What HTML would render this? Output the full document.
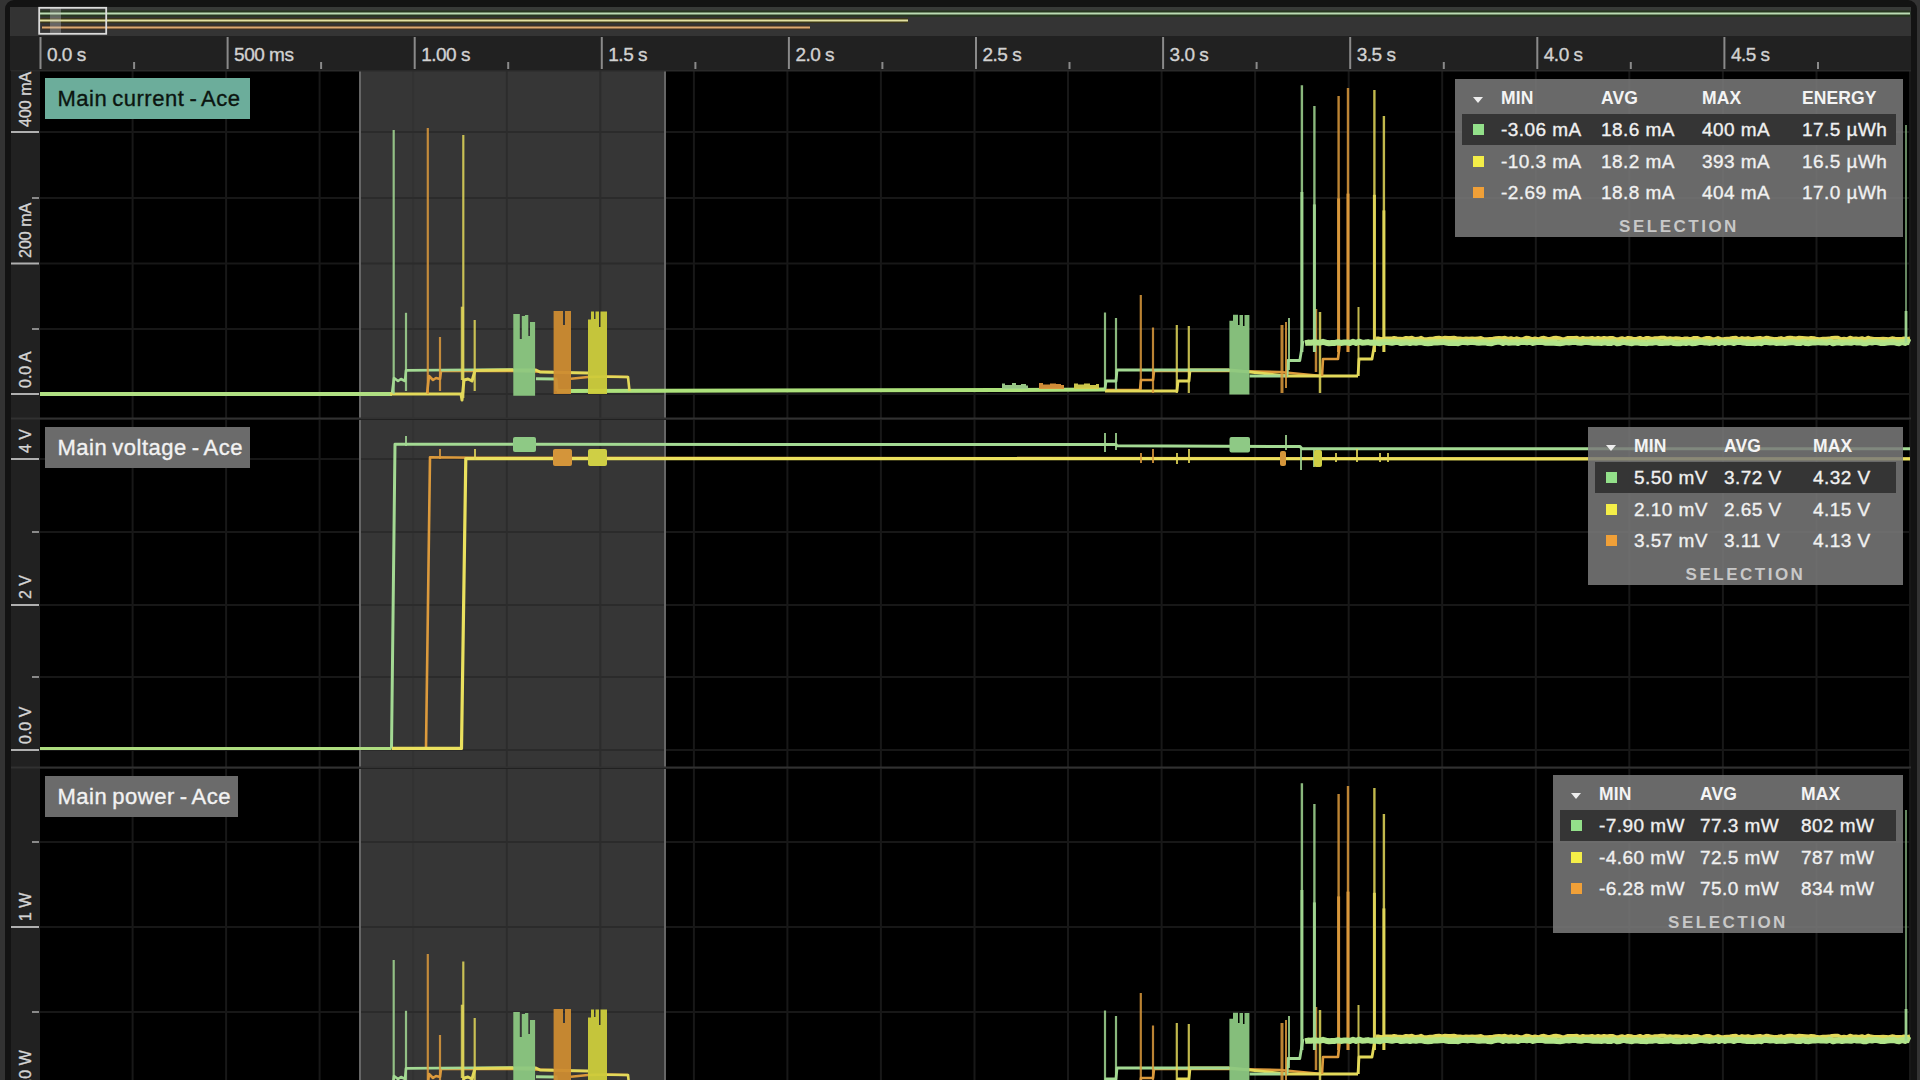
<!DOCTYPE html><html><head><meta charset="utf-8"><style>
*{margin:0;padding:0;box-sizing:border-box}
.tl,.yl,.lab,.st .c{-webkit-text-stroke:0.35px currentColor}
html,body{width:1920px;height:1080px;overflow:hidden;background:#333;font-family:"Liberation Sans",sans-serif}
.a{position:absolute}
.tl{position:absolute;top:43.5px;font-size:19px;line-height:22px;color:#d2d2d2;letter-spacing:-0.5px;white-space:nowrap}
.yl{position:absolute;font-size:16px;line-height:16px;color:#d4d4d4;white-space:nowrap;transform-origin:0 0;transform:rotate(-90deg)}
.lab{position:absolute;left:45px;height:41px;font-size:22px;line-height:41px;padding-left:12.5px;white-space:nowrap;letter-spacing:0.5px;word-spacing:-1.5px}
.st{position:absolute;background:rgba(122,122,122,0.86);color:#f0f0f0}
.st .h{position:absolute;font-weight:bold;font-size:17.5px;line-height:20px;color:#f4f4f4;top:8.5px;letter-spacing:0.1px}
.st .c{position:absolute;font-size:19px;line-height:22px;white-space:nowrap;letter-spacing:0.45px}
.st .hl{position:absolute;left:7px;background:#353535;height:31px}
.st .sq{position:absolute;width:11px;height:11px}
.st .sel{position:absolute;font-weight:bold;font-size:17px;line-height:20px;letter-spacing:2.5px;color:#c8c8c8;white-space:nowrap}
.tri{position:absolute;width:0;height:0;border-left:5.5px solid transparent;border-right:5.5px solid transparent;border-top:6px solid #eee}
</style></head><body>
<div class="a" style="left:4.5px;top:0;width:1912.5px;height:1120px;background:#131313;border-radius:9px"></div>
<div class="a" style="left:10px;top:7px;width:1901px;height:29px;background:#343434"></div>
<div class="a" style="left:39px;top:7px;width:1872px;height:10px;background:#2d382d"></div>
<div class="a" style="left:10.5px;top:7px;width:28px;height:29px;background:#333"></div>
<div class="a" style="left:10px;top:36px;width:1901px;height:35px;background:#212121"></div>
<div class="a" style="left:11px;top:71px;width:29px;height:1009px;background:#212121"></div>
<div class="a" style="left:40px;top:71px;width:1870px;height:347px;background:#000"></div>
<div class="a" style="left:40px;top:420px;width:1870px;height:347px;background:#000"></div>
<div class="a" style="left:40px;top:769px;width:1870px;height:311px;background:#000"></div>
<svg class="a" style="left:0;top:0" width="1920" height="1080"><line x1="132.6" y1="71" x2="132.6" y2="418" stroke="#181818" stroke-width="2"/><line x1="226.1" y1="71" x2="226.1" y2="418" stroke="#181818" stroke-width="2"/><line x1="319.6" y1="71" x2="319.6" y2="418" stroke="#181818" stroke-width="2"/><line x1="413.2" y1="71" x2="413.2" y2="418" stroke="#181818" stroke-width="2"/><line x1="506.8" y1="71" x2="506.8" y2="418" stroke="#181818" stroke-width="2"/><line x1="600.3" y1="71" x2="600.3" y2="418" stroke="#181818" stroke-width="2"/><line x1="693.9" y1="71" x2="693.9" y2="418" stroke="#181818" stroke-width="2"/><line x1="787.4" y1="71" x2="787.4" y2="418" stroke="#181818" stroke-width="2"/><line x1="880.9" y1="71" x2="880.9" y2="418" stroke="#181818" stroke-width="2"/><line x1="974.5" y1="71" x2="974.5" y2="418" stroke="#181818" stroke-width="2"/><line x1="1068.0" y1="71" x2="1068.0" y2="418" stroke="#181818" stroke-width="2"/><line x1="1161.6" y1="71" x2="1161.6" y2="418" stroke="#181818" stroke-width="2"/><line x1="1255.1" y1="71" x2="1255.1" y2="418" stroke="#181818" stroke-width="2"/><line x1="1348.7" y1="71" x2="1348.7" y2="418" stroke="#181818" stroke-width="2"/><line x1="1442.2" y1="71" x2="1442.2" y2="418" stroke="#181818" stroke-width="2"/><line x1="1535.8" y1="71" x2="1535.8" y2="418" stroke="#181818" stroke-width="2"/><line x1="1629.3" y1="71" x2="1629.3" y2="418" stroke="#181818" stroke-width="2"/><line x1="1722.9" y1="71" x2="1722.9" y2="418" stroke="#181818" stroke-width="2"/><line x1="1816.5" y1="71" x2="1816.5" y2="418" stroke="#181818" stroke-width="2"/><line x1="1910.0" y1="71" x2="1910.0" y2="418" stroke="#181818" stroke-width="2"/><line x1="40" y1="132" x2="1910" y2="132" stroke="#171717" stroke-width="2"/><line x1="40" y1="198" x2="1910" y2="198" stroke="#171717" stroke-width="2"/><line x1="40" y1="263.5" x2="1910" y2="263.5" stroke="#171717" stroke-width="2"/><line x1="40" y1="329" x2="1910" y2="329" stroke="#171717" stroke-width="2"/><line x1="40" y1="394" x2="1910" y2="394" stroke="#171717" stroke-width="2"/><line x1="132.6" y1="420" x2="132.6" y2="767" stroke="#181818" stroke-width="2"/><line x1="226.1" y1="420" x2="226.1" y2="767" stroke="#181818" stroke-width="2"/><line x1="319.6" y1="420" x2="319.6" y2="767" stroke="#181818" stroke-width="2"/><line x1="413.2" y1="420" x2="413.2" y2="767" stroke="#181818" stroke-width="2"/><line x1="506.8" y1="420" x2="506.8" y2="767" stroke="#181818" stroke-width="2"/><line x1="600.3" y1="420" x2="600.3" y2="767" stroke="#181818" stroke-width="2"/><line x1="693.9" y1="420" x2="693.9" y2="767" stroke="#181818" stroke-width="2"/><line x1="787.4" y1="420" x2="787.4" y2="767" stroke="#181818" stroke-width="2"/><line x1="880.9" y1="420" x2="880.9" y2="767" stroke="#181818" stroke-width="2"/><line x1="974.5" y1="420" x2="974.5" y2="767" stroke="#181818" stroke-width="2"/><line x1="1068.0" y1="420" x2="1068.0" y2="767" stroke="#181818" stroke-width="2"/><line x1="1161.6" y1="420" x2="1161.6" y2="767" stroke="#181818" stroke-width="2"/><line x1="1255.1" y1="420" x2="1255.1" y2="767" stroke="#181818" stroke-width="2"/><line x1="1348.7" y1="420" x2="1348.7" y2="767" stroke="#181818" stroke-width="2"/><line x1="1442.2" y1="420" x2="1442.2" y2="767" stroke="#181818" stroke-width="2"/><line x1="1535.8" y1="420" x2="1535.8" y2="767" stroke="#181818" stroke-width="2"/><line x1="1629.3" y1="420" x2="1629.3" y2="767" stroke="#181818" stroke-width="2"/><line x1="1722.9" y1="420" x2="1722.9" y2="767" stroke="#181818" stroke-width="2"/><line x1="1816.5" y1="420" x2="1816.5" y2="767" stroke="#181818" stroke-width="2"/><line x1="1910.0" y1="420" x2="1910.0" y2="767" stroke="#181818" stroke-width="2"/><line x1="40" y1="459" x2="1910" y2="459" stroke="#171717" stroke-width="2"/><line x1="40" y1="532" x2="1910" y2="532" stroke="#171717" stroke-width="2"/><line x1="40" y1="605" x2="1910" y2="605" stroke="#171717" stroke-width="2"/><line x1="40" y1="677" x2="1910" y2="677" stroke="#171717" stroke-width="2"/><line x1="40" y1="750" x2="1910" y2="750" stroke="#171717" stroke-width="2"/><line x1="132.6" y1="769" x2="132.6" y2="1080" stroke="#181818" stroke-width="2"/><line x1="226.1" y1="769" x2="226.1" y2="1080" stroke="#181818" stroke-width="2"/><line x1="319.6" y1="769" x2="319.6" y2="1080" stroke="#181818" stroke-width="2"/><line x1="413.2" y1="769" x2="413.2" y2="1080" stroke="#181818" stroke-width="2"/><line x1="506.8" y1="769" x2="506.8" y2="1080" stroke="#181818" stroke-width="2"/><line x1="600.3" y1="769" x2="600.3" y2="1080" stroke="#181818" stroke-width="2"/><line x1="693.9" y1="769" x2="693.9" y2="1080" stroke="#181818" stroke-width="2"/><line x1="787.4" y1="769" x2="787.4" y2="1080" stroke="#181818" stroke-width="2"/><line x1="880.9" y1="769" x2="880.9" y2="1080" stroke="#181818" stroke-width="2"/><line x1="974.5" y1="769" x2="974.5" y2="1080" stroke="#181818" stroke-width="2"/><line x1="1068.0" y1="769" x2="1068.0" y2="1080" stroke="#181818" stroke-width="2"/><line x1="1161.6" y1="769" x2="1161.6" y2="1080" stroke="#181818" stroke-width="2"/><line x1="1255.1" y1="769" x2="1255.1" y2="1080" stroke="#181818" stroke-width="2"/><line x1="1348.7" y1="769" x2="1348.7" y2="1080" stroke="#181818" stroke-width="2"/><line x1="1442.2" y1="769" x2="1442.2" y2="1080" stroke="#181818" stroke-width="2"/><line x1="1535.8" y1="769" x2="1535.8" y2="1080" stroke="#181818" stroke-width="2"/><line x1="1629.3" y1="769" x2="1629.3" y2="1080" stroke="#181818" stroke-width="2"/><line x1="1722.9" y1="769" x2="1722.9" y2="1080" stroke="#181818" stroke-width="2"/><line x1="1816.5" y1="769" x2="1816.5" y2="1080" stroke="#181818" stroke-width="2"/><line x1="1910.0" y1="769" x2="1910.0" y2="1080" stroke="#181818" stroke-width="2"/><line x1="40" y1="842" x2="1910" y2="842" stroke="#171717" stroke-width="2"/><line x1="40" y1="927" x2="1910" y2="927" stroke="#171717" stroke-width="2"/><line x1="40" y1="1012" x2="1910" y2="1012" stroke="#171717" stroke-width="2"/><rect x="359" y="71" width="307" height="347" fill="#363636"/><line x1="413.2" y1="71" x2="413.2" y2="418" stroke="#323232" stroke-width="2"/><line x1="506.8" y1="71" x2="506.8" y2="418" stroke="#2c2c2c" stroke-width="2"/><line x1="600.3" y1="71" x2="600.3" y2="418" stroke="#2c2c2c" stroke-width="2"/><line x1="361" y1="132" x2="664" y2="132" stroke="#2b2b2b" stroke-width="2"/><line x1="361" y1="198" x2="664" y2="198" stroke="#2b2b2b" stroke-width="2"/><line x1="361" y1="263.5" x2="664" y2="263.5" stroke="#2b2b2b" stroke-width="2"/><line x1="361" y1="329" x2="664" y2="329" stroke="#2b2b2b" stroke-width="2"/><line x1="361" y1="394" x2="664" y2="394" stroke="#2b2b2b" stroke-width="2"/><line x1="360" y1="71" x2="360" y2="418" stroke="#666" stroke-width="2"/><line x1="665" y1="71" x2="665" y2="418" stroke="#666" stroke-width="2"/><rect x="359" y="420" width="307" height="347" fill="#363636"/><line x1="413.2" y1="420" x2="413.2" y2="767" stroke="#323232" stroke-width="2"/><line x1="506.8" y1="420" x2="506.8" y2="767" stroke="#2c2c2c" stroke-width="2"/><line x1="600.3" y1="420" x2="600.3" y2="767" stroke="#2c2c2c" stroke-width="2"/><line x1="361" y1="459" x2="664" y2="459" stroke="#2b2b2b" stroke-width="2"/><line x1="361" y1="532" x2="664" y2="532" stroke="#2b2b2b" stroke-width="2"/><line x1="361" y1="605" x2="664" y2="605" stroke="#2b2b2b" stroke-width="2"/><line x1="361" y1="677" x2="664" y2="677" stroke="#2b2b2b" stroke-width="2"/><line x1="361" y1="750" x2="664" y2="750" stroke="#2b2b2b" stroke-width="2"/><line x1="360" y1="420" x2="360" y2="767" stroke="#666" stroke-width="2"/><line x1="665" y1="420" x2="665" y2="767" stroke="#666" stroke-width="2"/><rect x="359" y="769" width="307" height="311" fill="#363636"/><line x1="413.2" y1="769" x2="413.2" y2="1080" stroke="#323232" stroke-width="2"/><line x1="506.8" y1="769" x2="506.8" y2="1080" stroke="#2c2c2c" stroke-width="2"/><line x1="600.3" y1="769" x2="600.3" y2="1080" stroke="#2c2c2c" stroke-width="2"/><line x1="361" y1="842" x2="664" y2="842" stroke="#2b2b2b" stroke-width="2"/><line x1="361" y1="927" x2="664" y2="927" stroke="#2b2b2b" stroke-width="2"/><line x1="361" y1="1012" x2="664" y2="1012" stroke="#2b2b2b" stroke-width="2"/><line x1="360" y1="769" x2="360" y2="1080" stroke="#666" stroke-width="2"/><line x1="665" y1="769" x2="665" y2="1080" stroke="#666" stroke-width="2"/><rect x="11" y="417.5" width="1900" height="2" fill="#313131"/><rect x="11" y="766.5" width="1900" height="2" fill="#313131"/><rect x="11" y="70" width="1900" height="1.5" fill="#2a2a2a"/><path d="M40.0,394.0 L392.0,394.0" fill="none" stroke="#b0df82" stroke-width="4" stroke-linejoin="round" opacity="1"/><path d="M427.0,394.0 L429.0,376.0 L433.0,380.0 L436.0,378.0 L440.0,379.0 L441.0,371.0 L513.0,371.0 L553.0,372.0" fill="none" stroke="#dc9a3c" stroke-width="2.6" stroke-linejoin="round" opacity="1"/><path d="M571.0,378.8 L588.0,377.0 L607.0,376.5 L628.0,377.0" fill="none" stroke="#dc9a3c" stroke-width="2.5" stroke-linejoin="round" opacity="1"/><path d="M392.0,394.0 L394.0,378.0 L398.0,381.0 L401.0,379.0 L405.0,381.0 L406.0,370.4 L513.0,369.5" fill="none" stroke="#a3d993" stroke-width="2.6" stroke-linejoin="round" opacity="1"/><path d="M390.0,394.0 L461.0,394.0 L462.0,400.0 L464.0,380.0 L468.0,379.0 L472.0,381.0 L475.0,370.5 L513.0,370.0 L536.0,370.0 L540.0,372.0 L588.0,373.0" fill="none" stroke="#e3d95a" stroke-width="3" stroke-linejoin="round" opacity="1"/><line x1="393.7" y1="130" x2="393.7" y2="394" stroke="#a3d993" stroke-width="2.2" opacity="0.85"/><line x1="427.8" y1="128" x2="427.8" y2="394" stroke="#dc9a3c" stroke-width="2.2" opacity="0.85"/><line x1="463.3" y1="135" x2="463.3" y2="398" stroke="#e3d95a" stroke-width="2.2" opacity="0.85"/><line x1="406" y1="312.8" x2="406" y2="391" stroke="#a3d993" stroke-width="2.2" opacity="0.85"/><line x1="440" y1="337" x2="440" y2="391" stroke="#dc9a3c" stroke-width="2.2" opacity="0.85"/><line x1="474.7" y1="320" x2="474.7" y2="391" stroke="#e3d95a" stroke-width="2.2" opacity="0.85"/><line x1="462.3" y1="306.7" x2="462.3" y2="380" stroke="#e3d95a" stroke-width="3" opacity="0.85"/><path d="M536.0,378.8 L556.0,379.0 L557.0,391.0" fill="none" stroke="#a3d993" stroke-width="3" stroke-linejoin="round" opacity="1"/><path d="M557.0,391.0 L1000.0,390.0 L1105.0,389.5" fill="none" stroke="#ade27c" stroke-width="4" stroke-linejoin="round" opacity="1"/><path d="M607.0,376.8 L628.0,377.0 L629.5,391.0" fill="none" stroke="#e3d95a" stroke-width="2.6" stroke-linejoin="round" opacity="1"/><path d="M513.3,395.8 L513.3,314.0 L519.8,314.0 L519.8,339.0 L521.8,339.0 L521.8,316.0 L525.0,316.0 L525.0,315.0 L528.3,315.0 L528.3,336.0 L530.0,336.0 L530.0,322.0 L535.1,322.0 L535.1,395.8 Z" fill="#8cc882" opacity="0.95"/><path d="M553.6,394 L553.6,311.0 L563.0,311.0 L563.0,325.0 L565.0,325.0 L565.0,311.0 L571.0,311.0 L571,394 Z" fill="#cd8c32" opacity="0.95"/><path d="M588,394 L588.0,319.4 L591.0,319.4 L591.0,311.6 L594.0,311.6 L594.0,319.0 L595.5,319.0 L595.5,311.6 L599.0,311.6 L599.0,327.0 L600.5,327.0 L600.5,311.6 L607.0,311.6 L607,394 Z" fill="#cdcd3c" opacity="0.95"/><path d="M1002,389 L1002.0,383.5 L1005.0,383.5 L1005.0,385.0 L1012.0,385.0 L1012.0,383.0 L1016.0,383.0 L1016.0,385.0 L1021.0,385.0 L1021.0,384.0 L1026.0,384.0 L1026.0,385.5 L1028.0,385.5 L1028,389 Z" fill="#9fd08c" opacity="0.95"/><path d="M1039,389 L1039.0,383.0 L1043.0,383.0 L1043.0,384.5 L1050.0,384.5 L1050.0,383.5 L1056.0,383.5 L1056.0,384.0 L1061.0,384.0 L1061.0,385.0 L1064.0,385.0 L1064,389 Z" fill="#d9923a" opacity="0.95"/><path d="M1074,389 L1074.0,383.5 L1078.0,383.5 L1078.0,384.5 L1084.0,384.5 L1084.0,383.5 L1090.0,383.5 L1090.0,385.0 L1096.0,385.0 L1096.0,384.0 L1099.0,384.0 L1099,389 Z" fill="#d6d04e" opacity="0.95"/><path d="M1105.0,390.0 L1140.0,390.0 L1141.0,380.0 L1153.0,380.0 L1154.0,371.0 L1229.0,371.0 L1280.0,372.0 L1322.0,376.0" fill="none" stroke="#dc9a3c" stroke-width="2.6" stroke-linejoin="round" opacity="1"/><path d="M1105.0,391.0 L1177.0,391.0 L1178.0,381.0 L1189.0,381.0 L1190.0,370.0 L1229.0,370.0 L1250.0,372.0 L1288.0,376.0 L1358.0,376.0" fill="none" stroke="#e3d95a" stroke-width="2.8" stroke-linejoin="round" opacity="1"/><path d="M1105.0,389.0 L1106.0,381.0 L1116.0,381.0 L1117.0,370.0 L1229.0,370.0" fill="none" stroke="#a3d993" stroke-width="2.8" stroke-linejoin="round" opacity="1"/><line x1="1105" y1="312.5" x2="1105" y2="390" stroke="#a3d993" stroke-width="2.2" opacity="0.85"/><line x1="1116" y1="318" x2="1116" y2="390" stroke="#a3d993" stroke-width="2.2" opacity="0.85"/><line x1="1140.8" y1="295" x2="1140.8" y2="390" stroke="#dc9a3c" stroke-width="2.2" opacity="0.85"/><line x1="1153" y1="327.5" x2="1153" y2="393" stroke="#dc9a3c" stroke-width="2.2" opacity="0.85"/><line x1="1176.8" y1="325" x2="1176.8" y2="393" stroke="#e3d95a" stroke-width="2.2" opacity="0.85"/><line x1="1188.8" y1="326" x2="1188.8" y2="393" stroke="#e3d95a" stroke-width="2.2" opacity="0.85"/><path d="M1229.4,394.4 L1229.4,320.8 L1233.0,320.8 L1233.0,314.8 L1238.0,314.8 L1238.0,325.0 L1239.5,325.0 L1239.5,315.0 L1243.0,315.0 L1243.0,326.0 L1244.5,326.0 L1244.5,315.0 L1249.4,315.0 L1249.4,394.4 Z" fill="#8cc882" opacity="0.95"/><path d="M1249.5,376.0 L1287.0,376.0 L1288.0,360.5 L1299.8,360.5 L1303.0,341.0" fill="none" stroke="#a3d993" stroke-width="2.8" stroke-linejoin="round" opacity="1"/><path d="M1322.0,376.0 L1323.0,359.0 L1338.0,359.0 L1340.0,341.0" fill="none" stroke="#dc9a3c" stroke-width="2.6" stroke-linejoin="round" opacity="1"/><path d="M1358.0,376.0 L1359.0,359.0 L1372.0,359.0 L1375.0,341.0" fill="none" stroke="#e3d95a" stroke-width="2.8" stroke-linejoin="round" opacity="1"/><line x1="1282" y1="325" x2="1282" y2="393" stroke="#dc9a3c" stroke-width="3" opacity="0.85"/><line x1="1286" y1="322" x2="1286" y2="388" stroke="#dc9a3c" stroke-width="2" opacity="0.85"/><line x1="1289" y1="318" x2="1289" y2="370" stroke="#a3d993" stroke-width="2" opacity="0.85"/><line x1="1320" y1="312" x2="1320" y2="393" stroke="#e3d95a" stroke-width="2.5" opacity="0.85"/><line x1="1316" y1="309" x2="1316" y2="372" stroke="#dc9a3c" stroke-width="2.5" opacity="0.85"/><line x1="1358.5" y1="307" x2="1358.5" y2="376" stroke="#e3d95a" stroke-width="2" opacity="0.85"/><line x1="1301.9" y1="85.3" x2="1301.9" y2="352" stroke="#a3d993" stroke-width="2.4" opacity="0.85"/><line x1="1301.9" y1="191.98000000000002" x2="1301.9" y2="352" stroke="#a3d993" stroke-width="3.0" opacity="0.9"/><line x1="1314.4" y1="106" x2="1314.4" y2="352" stroke="#a3d993" stroke-width="2.4" opacity="0.85"/><line x1="1314.4" y1="204.4" x2="1314.4" y2="352" stroke="#a3d993" stroke-width="3.0" opacity="0.9"/><line x1="1338.6" y1="96" x2="1338.6" y2="352" stroke="#dc9a3c" stroke-width="2.4" opacity="0.85"/><line x1="1338.6" y1="198.4" x2="1338.6" y2="352" stroke="#dc9a3c" stroke-width="3.0" opacity="0.9"/><line x1="1348" y1="88" x2="1348" y2="352" stroke="#dc9a3c" stroke-width="2.4" opacity="0.85"/><line x1="1348" y1="193.60000000000002" x2="1348" y2="352" stroke="#dc9a3c" stroke-width="3.0" opacity="0.9"/><line x1="1374.4" y1="90" x2="1374.4" y2="352" stroke="#e3d95a" stroke-width="2.4" opacity="0.85"/><line x1="1374.4" y1="194.8" x2="1374.4" y2="352" stroke="#e3d95a" stroke-width="3.0" opacity="0.9"/><line x1="1383.9" y1="116" x2="1383.9" y2="352" stroke="#e3d95a" stroke-width="2.4" opacity="0.85"/><line x1="1383.9" y1="210.4" x2="1383.9" y2="352" stroke="#e3d95a" stroke-width="3.0" opacity="0.9"/><path d="M1376.0,338.4 L1379.0,338.6 L1382.0,339.2 L1385.0,338.4 L1388.0,338.5 L1391.0,338.6 L1394.0,338.0 L1397.0,338.5 L1400.0,338.7 L1403.0,339.0 L1406.0,337.9 L1409.0,338.2 L1412.0,337.8 L1415.0,339.0 L1418.0,338.8 L1421.0,337.8 L1424.0,339.3 L1427.0,339.2 L1430.0,338.7 L1433.0,338.7 L1436.0,338.0 L1439.0,337.7 L1442.0,338.5 L1445.0,337.8 L1448.0,338.0 L1451.0,338.1 L1454.0,337.7 L1457.0,338.4 L1460.0,338.4 L1463.0,339.0 L1466.0,338.5 L1469.0,338.7 L1472.0,338.5 L1475.0,338.8 L1478.0,338.4 L1481.0,338.1 L1484.0,339.3 L1487.0,339.3 L1490.0,339.0 L1493.0,338.8 L1496.0,338.2 L1499.0,338.1 L1502.0,338.2 L1505.0,337.8 L1508.0,338.9 L1511.0,338.3 L1514.0,339.1 L1517.0,338.3 L1520.0,339.2 L1523.0,339.1 L1526.0,337.7 L1529.0,338.0 L1532.0,339.2 L1535.0,338.5 L1538.0,339.3 L1541.0,338.3 L1544.0,337.8 L1547.0,338.7 L1550.0,338.9 L1553.0,338.1 L1556.0,337.8 L1559.0,338.2 L1562.0,339.2 L1565.0,338.9 L1568.0,337.9 L1571.0,338.1 L1574.0,337.9 L1577.0,337.8 L1580.0,339.0 L1583.0,338.0 L1586.0,338.6 L1589.0,338.4 L1592.0,338.0 L1595.0,338.9 L1598.0,337.9 L1601.0,338.7 L1604.0,337.9 L1607.0,338.4 L1610.0,338.0 L1613.0,338.1 L1616.0,339.3 L1619.0,339.0 L1622.0,338.2 L1625.0,339.1 L1628.0,338.0 L1631.0,338.3 L1634.0,339.1 L1637.0,338.7 L1640.0,337.9 L1643.0,339.3 L1646.0,338.0 L1649.0,338.1 L1652.0,338.9 L1655.0,338.2 L1658.0,338.2 L1661.0,337.8 L1664.0,337.8 L1667.0,338.6 L1670.0,338.1 L1673.0,338.7 L1676.0,338.3 L1679.0,338.4 L1682.0,339.2 L1685.0,338.5 L1688.0,338.6 L1691.0,339.1 L1694.0,338.0 L1697.0,337.9 L1700.0,339.2 L1703.0,339.0 L1706.0,338.1 L1709.0,338.0 L1712.0,338.9 L1715.0,339.2 L1718.0,338.0 L1721.0,339.2 L1724.0,339.1 L1727.0,338.7 L1730.0,338.4 L1733.0,337.9 L1736.0,337.8 L1739.0,339.2 L1742.0,338.1 L1745.0,338.8 L1748.0,338.1 L1751.0,339.0 L1754.0,338.7 L1757.0,338.2 L1760.0,338.0 L1763.0,338.9 L1766.0,337.8 L1769.0,338.1 L1772.0,338.6 L1775.0,339.1 L1778.0,338.7 L1781.0,338.1 L1784.0,339.2 L1787.0,338.0 L1790.0,337.7 L1793.0,338.1 L1796.0,338.4 L1799.0,337.8 L1802.0,338.0 L1805.0,338.3 L1808.0,338.6 L1811.0,337.9 L1814.0,338.3 L1817.0,339.1 L1820.0,339.3 L1823.0,338.8 L1826.0,338.8 L1829.0,338.6 L1832.0,337.9 L1835.0,337.8 L1838.0,337.7 L1841.0,339.2 L1844.0,338.8 L1847.0,339.2 L1850.0,337.7 L1853.0,338.7 L1856.0,338.5 L1859.0,338.9 L1862.0,338.2 L1865.0,339.3 L1868.0,337.8 L1871.0,338.6 L1874.0,338.9 L1877.0,339.1 L1880.0,338.9 L1883.0,338.8 L1886.0,339.0 L1889.0,339.2 L1892.0,338.3 L1895.0,338.8 L1898.0,339.1 L1901.0,339.1 L1904.0,338.4 L1907.0,339.0 L1910.0,338.5" fill="none" stroke="#e3d95a" stroke-width="4" stroke-linejoin="round" opacity="1"/><path d="M1305.0,343.1 L1308.0,342.6 L1311.0,342.7 L1314.0,342.3 L1317.0,342.6 L1320.0,342.7 L1323.0,341.8 L1326.0,342.7 L1329.0,343.3 L1332.0,343.1 L1335.0,342.9 L1338.0,342.3 L1341.0,342.9 L1344.0,342.6 L1347.0,342.4 L1350.0,343.0 L1353.0,341.8 L1356.0,342.9 L1359.0,341.7 L1362.0,342.7 L1365.0,342.5 L1368.0,342.1 L1371.0,342.8 L1374.0,342.5 L1377.0,342.7 L1380.0,343.2 L1383.0,342.1 L1386.0,341.7 L1389.0,342.2 L1392.0,342.8 L1395.0,342.0 L1398.0,342.0 L1401.0,343.1 L1404.0,342.8 L1407.0,342.4 L1410.0,343.1 L1413.0,342.2 L1416.0,342.8 L1419.0,342.0 L1422.0,342.4 L1425.0,343.0 L1428.0,343.2 L1431.0,343.1 L1434.0,342.3 L1437.0,342.6 L1440.0,342.2 L1443.0,341.9 L1446.0,342.5 L1449.0,343.0 L1452.0,343.1 L1455.0,342.8 L1458.0,343.2 L1461.0,342.1 L1464.0,342.0 L1467.0,342.4 L1470.0,342.1 L1473.0,342.0 L1476.0,342.4 L1479.0,342.7 L1482.0,342.5 L1485.0,342.2 L1488.0,343.0 L1491.0,343.3 L1494.0,342.4 L1497.0,341.8 L1500.0,341.8 L1503.0,343.1 L1506.0,341.8 L1509.0,342.8 L1512.0,342.6 L1515.0,342.2 L1518.0,343.0 L1521.0,341.7 L1524.0,341.9 L1527.0,342.4 L1530.0,341.7 L1533.0,343.0 L1536.0,342.1 L1539.0,341.9 L1542.0,341.8 L1545.0,342.7 L1548.0,342.4 L1551.0,342.7 L1554.0,342.7 L1557.0,343.0 L1560.0,343.2 L1563.0,342.8 L1566.0,342.0 L1569.0,342.5 L1572.0,342.0 L1575.0,341.7 L1578.0,342.5 L1581.0,342.8 L1584.0,342.0 L1587.0,342.1 L1590.0,342.3 L1593.0,342.8 L1596.0,342.5 L1599.0,342.7 L1602.0,342.9 L1605.0,342.3 L1608.0,343.0 L1611.0,343.1 L1614.0,341.8 L1617.0,343.2 L1620.0,342.9 L1623.0,341.9 L1626.0,342.4 L1629.0,342.7 L1632.0,343.2 L1635.0,342.3 L1638.0,342.6 L1641.0,343.1 L1644.0,343.0 L1647.0,343.2 L1650.0,342.4 L1653.0,342.7 L1656.0,342.0 L1659.0,342.9 L1662.0,343.0 L1665.0,342.7 L1668.0,342.8 L1671.0,342.0 L1674.0,343.1 L1677.0,343.3 L1680.0,343.3 L1683.0,342.6 L1686.0,343.0 L1689.0,342.2 L1692.0,343.2 L1695.0,343.1 L1698.0,342.3 L1701.0,341.8 L1704.0,342.4 L1707.0,342.6 L1710.0,342.9 L1713.0,342.5 L1716.0,341.7 L1719.0,343.0 L1722.0,341.8 L1725.0,343.0 L1728.0,342.0 L1731.0,342.2 L1734.0,343.0 L1737.0,341.9 L1740.0,341.9 L1743.0,342.5 L1746.0,342.9 L1749.0,343.0 L1752.0,342.8 L1755.0,343.2 L1758.0,342.5 L1761.0,343.2 L1764.0,341.8 L1767.0,342.1 L1770.0,342.5 L1773.0,342.2 L1776.0,342.9 L1779.0,342.7 L1782.0,342.5 L1785.0,343.0 L1788.0,342.6 L1791.0,342.2 L1794.0,342.3 L1797.0,343.1 L1800.0,343.1 L1803.0,342.0 L1806.0,343.1 L1809.0,343.2 L1812.0,342.5 L1815.0,342.6 L1818.0,342.0 L1821.0,342.6 L1824.0,342.5 L1827.0,342.7 L1830.0,341.7 L1833.0,343.3 L1836.0,342.5 L1839.0,342.3 L1842.0,343.0 L1845.0,342.6 L1848.0,342.5 L1851.0,342.8 L1854.0,341.8 L1857.0,342.6 L1860.0,342.4 L1863.0,343.2 L1866.0,343.2 L1869.0,342.1 L1872.0,342.5 L1875.0,341.9 L1878.0,342.4 L1881.0,343.0 L1884.0,343.1 L1887.0,342.5 L1890.0,342.2 L1893.0,342.0 L1896.0,342.7 L1899.0,343.2 L1902.0,341.9 L1905.0,342.9 L1908.0,341.7 L1910.0,342.5" fill="none" stroke="#b0e38a" stroke-width="6" stroke-linejoin="round" opacity="1"/><path d="M1376.0,340.1 L1381.0,340.2 L1386.0,340.7 L1391.0,340.3 L1396.0,340.3 L1401.0,340.6 L1406.0,340.0 L1411.0,340.8 L1416.0,340.0 L1421.0,340.5 L1426.0,340.2 L1431.0,340.1 L1436.0,340.5 L1441.0,340.4 L1446.0,340.4 L1451.0,340.4 L1456.0,340.5 L1461.0,340.1 L1466.0,340.1 L1471.0,340.7 L1476.0,340.7 L1481.0,340.5 L1486.0,340.9 L1491.0,340.6 L1496.0,340.9 L1501.0,340.2 L1506.0,340.8 L1511.0,340.9 L1516.0,341.0 L1521.0,340.3 L1526.0,340.3 L1531.0,341.0 L1536.0,340.2 L1541.0,341.1 L1546.0,341.0 L1551.0,340.1 L1556.0,340.2 L1561.0,340.8 L1566.0,340.2 L1571.0,340.0 L1576.0,340.9 L1581.0,340.4 L1586.0,340.8 L1591.0,340.1 L1596.0,340.4 L1601.0,340.7 L1606.0,339.9 L1611.0,340.1 L1616.0,340.7 L1621.0,341.0 L1626.0,341.1 L1631.0,340.0 L1636.0,340.5 L1641.0,340.8 L1646.0,340.5 L1651.0,340.7 L1656.0,340.1 L1661.0,340.0 L1666.0,340.0 L1671.0,339.9 L1676.0,340.6 L1681.0,340.5 L1686.0,340.6 L1691.0,340.1 L1696.0,340.1 L1701.0,340.1 L1706.0,340.9 L1711.0,341.1 L1716.0,341.0 L1721.0,340.0 L1726.0,340.0 L1731.0,341.0 L1736.0,340.5 L1741.0,340.8 L1746.0,340.3 L1751.0,340.5 L1756.0,340.5 L1761.0,340.4 L1766.0,340.6 L1771.0,339.9 L1776.0,340.7 L1781.0,340.9 L1786.0,340.1 L1791.0,340.4 L1796.0,340.8 L1801.0,340.4 L1806.0,340.1 L1811.0,340.1 L1816.0,340.5 L1821.0,339.9 L1826.0,341.0 L1831.0,340.9 L1836.0,340.7 L1841.0,340.9 L1846.0,340.7 L1851.0,340.4 L1856.0,340.6 L1861.0,340.5 L1866.0,341.1 L1871.0,340.9 L1876.0,340.2 L1881.0,341.0 L1886.0,340.8 L1891.0,340.8 L1896.0,340.9 L1901.0,340.4 L1906.0,341.0 L1910.0,340.5" fill="none" stroke="#c2e47c" stroke-width="2.5" stroke-linejoin="round" opacity="0.6"/><line x1="1906" y1="125" x2="1906" y2="341" stroke="#7fa878" stroke-width="2" opacity="0.8"/><line x1="1906" y1="311" x2="1906" y2="343" stroke="#a3d993" stroke-width="2.8" opacity="0.9"/><path d="M40.0,748.4 L391.5,748.4" fill="none" stroke="#aedd80" stroke-width="3" stroke-linejoin="round" opacity="1"/><path d="M391.5,748.4 L395.0,444.3 L520.0,444.3 L1116.0,444.5 L1117.0,445.8 L1300.0,446.5 L1302.0,448.7 L1910.0,448.7" fill="none" stroke="#a3d993" stroke-width="3" stroke-linejoin="round" opacity="1"/><path d="M426.0,748.4 L430.0,457.3 L480.0,457.8 L1910.0,458.8" fill="none" stroke="#dc9a3c" stroke-width="2.6" stroke-linejoin="round" opacity="1"/><path d="M392.0,748.4 L461.5,748.4 L465.8,458.6 L1910.0,458.9" fill="none" stroke="#ebe15e" stroke-width="3.2" stroke-linejoin="round" opacity="1"/><line x1="406" y1="436" x2="406" y2="446" stroke="#a3d993" stroke-width="2" opacity="0.85"/><line x1="440" y1="449" x2="440" y2="459" stroke="#dc9a3c" stroke-width="2" opacity="0.85"/><line x1="475" y1="449" x2="475" y2="460" stroke="#e3d95a" stroke-width="2" opacity="0.85"/><line x1="1105" y1="433" x2="1105" y2="452" stroke="#a3d993" stroke-width="2" opacity="0.85"/><line x1="1116" y1="433" x2="1116" y2="450" stroke="#a3d993" stroke-width="2" opacity="0.85"/><line x1="1141" y1="453" x2="1141" y2="463" stroke="#dc9a3c" stroke-width="2" opacity="0.85"/><line x1="1153" y1="449" x2="1153" y2="463" stroke="#dc9a3c" stroke-width="2" opacity="0.85"/><line x1="1177" y1="453" x2="1177" y2="464" stroke="#e3d95a" stroke-width="2" opacity="0.85"/><line x1="1189" y1="449" x2="1189" y2="463" stroke="#e3d95a" stroke-width="2" opacity="0.85"/><line x1="1286" y1="435" x2="1286" y2="450" stroke="#a3d993" stroke-width="2" opacity="0.85"/><line x1="1301" y1="448" x2="1301" y2="470" stroke="#a3d993" stroke-width="2" opacity="0.85"/><line x1="1314" y1="448" x2="1314" y2="467" stroke="#a3d993" stroke-width="2" opacity="0.85"/><line x1="1336" y1="453" x2="1336" y2="462" stroke="#e3d95a" stroke-width="2" opacity="0.85"/><line x1="1357" y1="449" x2="1357" y2="462" stroke="#e3d95a" stroke-width="2" opacity="0.85"/><line x1="1380" y1="453" x2="1380" y2="462" stroke="#e3d95a" stroke-width="2" opacity="0.85"/><line x1="1388" y1="453" x2="1388" y2="462" stroke="#e3d95a" stroke-width="2" opacity="0.85"/><rect x="513" y="437" width="23" height="15" fill="#8ec985" rx="2"/><rect x="553" y="449" width="19" height="17" fill="#d4953a" rx="2"/><rect x="588" y="449" width="19" height="17" fill="#cfcf45" rx="2"/><rect x="1229.5" y="437" width="20.5" height="15.5" fill="#8ec985" rx="2"/><rect x="1280" y="451" width="6" height="15" fill="#d4953a" rx="2"/><rect x="1314" y="450" width="8" height="17" fill="#cfcf45" rx="2"/><path d="M40.0,1092.0 L392.0,1092.0" fill="none" stroke="#b0df82" stroke-width="4" stroke-linejoin="round" opacity="1"/><path d="M427.0,1092.0 L429.0,1074.0 L433.0,1078.0 L436.0,1076.0 L440.0,1077.0 L441.0,1069.0 L513.0,1069.0 L553.0,1070.0" fill="none" stroke="#dc9a3c" stroke-width="2.6" stroke-linejoin="round" opacity="1"/><path d="M571.0,1076.8 L588.0,1075.0 L607.0,1074.5 L628.0,1075.0" fill="none" stroke="#dc9a3c" stroke-width="2.5" stroke-linejoin="round" opacity="1"/><path d="M392.0,1092.0 L394.0,1076.0 L398.0,1079.0 L401.0,1077.0 L405.0,1079.0 L406.0,1068.4 L513.0,1067.5" fill="none" stroke="#a3d993" stroke-width="2.6" stroke-linejoin="round" opacity="1"/><path d="M390.0,1092.0 L461.0,1092.0 L462.0,1098.0 L464.0,1078.0 L468.0,1077.0 L472.0,1079.0 L475.0,1068.5 L513.0,1068.0 L536.0,1068.0 L540.0,1070.0 L588.0,1071.0" fill="none" stroke="#e3d95a" stroke-width="3" stroke-linejoin="round" opacity="1"/><line x1="393.7" y1="960" x2="393.7" y2="1092" stroke="#a3d993" stroke-width="2.2" opacity="0.85"/><line x1="427.8" y1="954" x2="427.8" y2="1092" stroke="#dc9a3c" stroke-width="2.2" opacity="0.85"/><line x1="463.3" y1="961.5" x2="463.3" y2="1096" stroke="#e3d95a" stroke-width="2.2" opacity="0.85"/><line x1="406" y1="1010.8" x2="406" y2="1089" stroke="#a3d993" stroke-width="2.2" opacity="0.85"/><line x1="440" y1="1035" x2="440" y2="1089" stroke="#dc9a3c" stroke-width="2.2" opacity="0.85"/><line x1="474.7" y1="1018" x2="474.7" y2="1089" stroke="#e3d95a" stroke-width="2.2" opacity="0.85"/><line x1="462.3" y1="1004.7" x2="462.3" y2="1078" stroke="#e3d95a" stroke-width="3" opacity="0.85"/><path d="M536.0,1076.8 L556.0,1077.0 L557.0,1089.0" fill="none" stroke="#a3d993" stroke-width="3" stroke-linejoin="round" opacity="1"/><path d="M557.0,1089.0 L1000.0,1088.0 L1105.0,1087.5" fill="none" stroke="#ade27c" stroke-width="4" stroke-linejoin="round" opacity="1"/><path d="M607.0,1074.8 L628.0,1075.0 L629.5,1089.0" fill="none" stroke="#e3d95a" stroke-width="2.6" stroke-linejoin="round" opacity="1"/><path d="M513.3,1093.8 L513.3,1012.0 L519.8,1012.0 L519.8,1037.0 L521.8,1037.0 L521.8,1014.0 L525.0,1014.0 L525.0,1013.0 L528.3,1013.0 L528.3,1034.0 L530.0,1034.0 L530.0,1020.0 L535.1,1020.0 L535.1,1093.8 Z" fill="#8cc882" opacity="0.95"/><path d="M553.6,1092 L553.6,1009.0 L563.0,1009.0 L563.0,1023.0 L565.0,1023.0 L565.0,1009.0 L571.0,1009.0 L571,1092 Z" fill="#cd8c32" opacity="0.95"/><path d="M588,1092 L588.0,1017.4 L591.0,1017.4 L591.0,1009.6 L594.0,1009.6 L594.0,1017.0 L595.5,1017.0 L595.5,1009.6 L599.0,1009.6 L599.0,1025.0 L600.5,1025.0 L600.5,1009.6 L607.0,1009.6 L607,1092 Z" fill="#cdcd3c" opacity="0.95"/><path d="M1002,1087 L1002.0,1081.5 L1005.0,1081.5 L1005.0,1083.0 L1012.0,1083.0 L1012.0,1081.0 L1016.0,1081.0 L1016.0,1083.0 L1021.0,1083.0 L1021.0,1082.0 L1026.0,1082.0 L1026.0,1083.5 L1028.0,1083.5 L1028,1087 Z" fill="#9fd08c" opacity="0.95"/><path d="M1039,1087 L1039.0,1081.0 L1043.0,1081.0 L1043.0,1082.5 L1050.0,1082.5 L1050.0,1081.5 L1056.0,1081.5 L1056.0,1082.0 L1061.0,1082.0 L1061.0,1083.0 L1064.0,1083.0 L1064,1087 Z" fill="#d9923a" opacity="0.95"/><path d="M1074,1087 L1074.0,1081.5 L1078.0,1081.5 L1078.0,1082.5 L1084.0,1082.5 L1084.0,1081.5 L1090.0,1081.5 L1090.0,1083.0 L1096.0,1083.0 L1096.0,1082.0 L1099.0,1082.0 L1099,1087 Z" fill="#d6d04e" opacity="0.95"/><path d="M1105.0,1088.0 L1140.0,1088.0 L1141.0,1078.0 L1153.0,1078.0 L1154.0,1069.0 L1229.0,1069.0 L1280.0,1070.0 L1322.0,1074.0" fill="none" stroke="#dc9a3c" stroke-width="2.6" stroke-linejoin="round" opacity="1"/><path d="M1105.0,1089.0 L1177.0,1089.0 L1178.0,1079.0 L1189.0,1079.0 L1190.0,1068.0 L1229.0,1068.0 L1250.0,1070.0 L1288.0,1074.0 L1358.0,1074.0" fill="none" stroke="#e3d95a" stroke-width="2.8" stroke-linejoin="round" opacity="1"/><path d="M1105.0,1087.0 L1106.0,1079.0 L1116.0,1079.0 L1117.0,1068.0 L1229.0,1068.0" fill="none" stroke="#a3d993" stroke-width="2.8" stroke-linejoin="round" opacity="1"/><line x1="1105" y1="1010.5" x2="1105" y2="1088" stroke="#a3d993" stroke-width="2.2" opacity="0.85"/><line x1="1116" y1="1016" x2="1116" y2="1088" stroke="#a3d993" stroke-width="2.2" opacity="0.85"/><line x1="1140.8" y1="993" x2="1140.8" y2="1088" stroke="#dc9a3c" stroke-width="2.2" opacity="0.85"/><line x1="1153" y1="1025.5" x2="1153" y2="1091" stroke="#dc9a3c" stroke-width="2.2" opacity="0.85"/><line x1="1176.8" y1="1023" x2="1176.8" y2="1091" stroke="#e3d95a" stroke-width="2.2" opacity="0.85"/><line x1="1188.8" y1="1024" x2="1188.8" y2="1091" stroke="#e3d95a" stroke-width="2.2" opacity="0.85"/><path d="M1229.4,1092.4 L1229.4,1018.8 L1233.0,1018.8 L1233.0,1012.8 L1238.0,1012.8 L1238.0,1023.0 L1239.5,1023.0 L1239.5,1013.0 L1243.0,1013.0 L1243.0,1024.0 L1244.5,1024.0 L1244.5,1013.0 L1249.4,1013.0 L1249.4,1092.4 Z" fill="#8cc882" opacity="0.95"/><path d="M1249.5,1074.0 L1287.0,1074.0 L1288.0,1058.5 L1299.8,1058.5 L1303.0,1039.0" fill="none" stroke="#a3d993" stroke-width="2.8" stroke-linejoin="round" opacity="1"/><path d="M1322.0,1074.0 L1323.0,1057.0 L1338.0,1057.0 L1340.0,1039.0" fill="none" stroke="#dc9a3c" stroke-width="2.6" stroke-linejoin="round" opacity="1"/><path d="M1358.0,1074.0 L1359.0,1057.0 L1372.0,1057.0 L1375.0,1039.0" fill="none" stroke="#e3d95a" stroke-width="2.8" stroke-linejoin="round" opacity="1"/><line x1="1282" y1="1023" x2="1282" y2="1091" stroke="#dc9a3c" stroke-width="3" opacity="0.85"/><line x1="1286" y1="1020" x2="1286" y2="1086" stroke="#dc9a3c" stroke-width="2" opacity="0.85"/><line x1="1289" y1="1016" x2="1289" y2="1068" stroke="#a3d993" stroke-width="2" opacity="0.85"/><line x1="1320" y1="1010" x2="1320" y2="1091" stroke="#e3d95a" stroke-width="2.5" opacity="0.85"/><line x1="1316" y1="1007" x2="1316" y2="1070" stroke="#dc9a3c" stroke-width="2.5" opacity="0.85"/><line x1="1358.5" y1="1005" x2="1358.5" y2="1074" stroke="#e3d95a" stroke-width="2" opacity="0.85"/><line x1="1301.9" y1="783.3" x2="1301.9" y2="1050" stroke="#a3d993" stroke-width="2.4" opacity="0.85"/><line x1="1301.9" y1="889.98" x2="1301.9" y2="1050" stroke="#a3d993" stroke-width="3.0" opacity="0.9"/><line x1="1314.4" y1="804" x2="1314.4" y2="1050" stroke="#a3d993" stroke-width="2.4" opacity="0.85"/><line x1="1314.4" y1="902.4" x2="1314.4" y2="1050" stroke="#a3d993" stroke-width="3.0" opacity="0.9"/><line x1="1338.6" y1="794" x2="1338.6" y2="1050" stroke="#dc9a3c" stroke-width="2.4" opacity="0.85"/><line x1="1338.6" y1="896.4" x2="1338.6" y2="1050" stroke="#dc9a3c" stroke-width="3.0" opacity="0.9"/><line x1="1348" y1="786" x2="1348" y2="1050" stroke="#dc9a3c" stroke-width="2.4" opacity="0.85"/><line x1="1348" y1="891.6" x2="1348" y2="1050" stroke="#dc9a3c" stroke-width="3.0" opacity="0.9"/><line x1="1374.4" y1="788" x2="1374.4" y2="1050" stroke="#e3d95a" stroke-width="2.4" opacity="0.85"/><line x1="1374.4" y1="892.8" x2="1374.4" y2="1050" stroke="#e3d95a" stroke-width="3.0" opacity="0.9"/><line x1="1383.9" y1="814" x2="1383.9" y2="1050" stroke="#e3d95a" stroke-width="2.4" opacity="0.85"/><line x1="1383.9" y1="908.4" x2="1383.9" y2="1050" stroke="#e3d95a" stroke-width="3.0" opacity="0.9"/><path d="M1376.0,1036.4 L1379.0,1036.6 L1382.0,1037.2 L1385.0,1036.4 L1388.0,1036.5 L1391.0,1036.6 L1394.0,1036.0 L1397.0,1036.5 L1400.0,1036.7 L1403.0,1037.0 L1406.0,1035.9 L1409.0,1036.2 L1412.0,1035.8 L1415.0,1037.0 L1418.0,1036.8 L1421.0,1035.8 L1424.0,1037.3 L1427.0,1037.2 L1430.0,1036.7 L1433.0,1036.7 L1436.0,1036.0 L1439.0,1035.7 L1442.0,1036.5 L1445.0,1035.8 L1448.0,1036.0 L1451.0,1036.1 L1454.0,1035.7 L1457.0,1036.4 L1460.0,1036.4 L1463.0,1037.0 L1466.0,1036.5 L1469.0,1036.7 L1472.0,1036.5 L1475.0,1036.8 L1478.0,1036.4 L1481.0,1036.1 L1484.0,1037.3 L1487.0,1037.3 L1490.0,1037.0 L1493.0,1036.8 L1496.0,1036.2 L1499.0,1036.1 L1502.0,1036.2 L1505.0,1035.8 L1508.0,1036.9 L1511.0,1036.3 L1514.0,1037.1 L1517.0,1036.3 L1520.0,1037.2 L1523.0,1037.1 L1526.0,1035.7 L1529.0,1036.0 L1532.0,1037.2 L1535.0,1036.5 L1538.0,1037.3 L1541.0,1036.3 L1544.0,1035.8 L1547.0,1036.7 L1550.0,1036.9 L1553.0,1036.1 L1556.0,1035.8 L1559.0,1036.2 L1562.0,1037.2 L1565.0,1036.9 L1568.0,1035.9 L1571.0,1036.1 L1574.0,1035.9 L1577.0,1035.8 L1580.0,1037.0 L1583.0,1036.0 L1586.0,1036.6 L1589.0,1036.4 L1592.0,1036.0 L1595.0,1036.9 L1598.0,1035.9 L1601.0,1036.7 L1604.0,1035.9 L1607.0,1036.4 L1610.0,1036.0 L1613.0,1036.1 L1616.0,1037.3 L1619.0,1037.0 L1622.0,1036.2 L1625.0,1037.1 L1628.0,1036.0 L1631.0,1036.3 L1634.0,1037.1 L1637.0,1036.7 L1640.0,1035.9 L1643.0,1037.3 L1646.0,1036.0 L1649.0,1036.1 L1652.0,1036.9 L1655.0,1036.2 L1658.0,1036.2 L1661.0,1035.8 L1664.0,1035.8 L1667.0,1036.6 L1670.0,1036.1 L1673.0,1036.7 L1676.0,1036.3 L1679.0,1036.4 L1682.0,1037.2 L1685.0,1036.5 L1688.0,1036.6 L1691.0,1037.1 L1694.0,1036.0 L1697.0,1035.9 L1700.0,1037.2 L1703.0,1037.0 L1706.0,1036.1 L1709.0,1036.0 L1712.0,1036.9 L1715.0,1037.2 L1718.0,1036.0 L1721.0,1037.2 L1724.0,1037.1 L1727.0,1036.7 L1730.0,1036.4 L1733.0,1035.9 L1736.0,1035.8 L1739.0,1037.2 L1742.0,1036.1 L1745.0,1036.8 L1748.0,1036.1 L1751.0,1037.0 L1754.0,1036.7 L1757.0,1036.2 L1760.0,1036.0 L1763.0,1036.9 L1766.0,1035.8 L1769.0,1036.1 L1772.0,1036.6 L1775.0,1037.1 L1778.0,1036.7 L1781.0,1036.1 L1784.0,1037.2 L1787.0,1036.0 L1790.0,1035.7 L1793.0,1036.1 L1796.0,1036.4 L1799.0,1035.8 L1802.0,1036.0 L1805.0,1036.3 L1808.0,1036.6 L1811.0,1035.9 L1814.0,1036.3 L1817.0,1037.1 L1820.0,1037.3 L1823.0,1036.8 L1826.0,1036.8 L1829.0,1036.6 L1832.0,1035.9 L1835.0,1035.8 L1838.0,1035.7 L1841.0,1037.2 L1844.0,1036.8 L1847.0,1037.2 L1850.0,1035.7 L1853.0,1036.7 L1856.0,1036.5 L1859.0,1036.9 L1862.0,1036.2 L1865.0,1037.3 L1868.0,1035.8 L1871.0,1036.6 L1874.0,1036.9 L1877.0,1037.1 L1880.0,1036.9 L1883.0,1036.8 L1886.0,1037.0 L1889.0,1037.2 L1892.0,1036.3 L1895.0,1036.8 L1898.0,1037.1 L1901.0,1037.1 L1904.0,1036.4 L1907.0,1037.0 L1910.0,1036.5" fill="none" stroke="#e3d95a" stroke-width="4" stroke-linejoin="round" opacity="1"/><path d="M1305.0,1041.1 L1308.0,1040.6 L1311.0,1040.7 L1314.0,1040.3 L1317.0,1040.6 L1320.0,1040.7 L1323.0,1039.8 L1326.0,1040.7 L1329.0,1041.3 L1332.0,1041.1 L1335.0,1040.9 L1338.0,1040.3 L1341.0,1040.9 L1344.0,1040.6 L1347.0,1040.4 L1350.0,1041.0 L1353.0,1039.8 L1356.0,1040.9 L1359.0,1039.7 L1362.0,1040.7 L1365.0,1040.5 L1368.0,1040.1 L1371.0,1040.8 L1374.0,1040.5 L1377.0,1040.7 L1380.0,1041.2 L1383.0,1040.1 L1386.0,1039.7 L1389.0,1040.2 L1392.0,1040.8 L1395.0,1040.0 L1398.0,1040.0 L1401.0,1041.1 L1404.0,1040.8 L1407.0,1040.4 L1410.0,1041.1 L1413.0,1040.2 L1416.0,1040.8 L1419.0,1040.0 L1422.0,1040.4 L1425.0,1041.0 L1428.0,1041.2 L1431.0,1041.1 L1434.0,1040.3 L1437.0,1040.6 L1440.0,1040.2 L1443.0,1039.9 L1446.0,1040.5 L1449.0,1041.0 L1452.0,1041.1 L1455.0,1040.8 L1458.0,1041.2 L1461.0,1040.1 L1464.0,1040.0 L1467.0,1040.4 L1470.0,1040.1 L1473.0,1040.0 L1476.0,1040.4 L1479.0,1040.7 L1482.0,1040.5 L1485.0,1040.2 L1488.0,1041.0 L1491.0,1041.3 L1494.0,1040.4 L1497.0,1039.8 L1500.0,1039.8 L1503.0,1041.1 L1506.0,1039.8 L1509.0,1040.8 L1512.0,1040.6 L1515.0,1040.2 L1518.0,1041.0 L1521.0,1039.7 L1524.0,1039.9 L1527.0,1040.4 L1530.0,1039.7 L1533.0,1041.0 L1536.0,1040.1 L1539.0,1039.9 L1542.0,1039.8 L1545.0,1040.7 L1548.0,1040.4 L1551.0,1040.7 L1554.0,1040.7 L1557.0,1041.0 L1560.0,1041.2 L1563.0,1040.8 L1566.0,1040.0 L1569.0,1040.5 L1572.0,1040.0 L1575.0,1039.7 L1578.0,1040.5 L1581.0,1040.8 L1584.0,1040.0 L1587.0,1040.1 L1590.0,1040.3 L1593.0,1040.8 L1596.0,1040.5 L1599.0,1040.7 L1602.0,1040.9 L1605.0,1040.3 L1608.0,1041.0 L1611.0,1041.1 L1614.0,1039.8 L1617.0,1041.2 L1620.0,1040.9 L1623.0,1039.9 L1626.0,1040.4 L1629.0,1040.7 L1632.0,1041.2 L1635.0,1040.3 L1638.0,1040.6 L1641.0,1041.1 L1644.0,1041.0 L1647.0,1041.2 L1650.0,1040.4 L1653.0,1040.7 L1656.0,1040.0 L1659.0,1040.9 L1662.0,1041.0 L1665.0,1040.7 L1668.0,1040.8 L1671.0,1040.0 L1674.0,1041.1 L1677.0,1041.3 L1680.0,1041.3 L1683.0,1040.6 L1686.0,1041.0 L1689.0,1040.2 L1692.0,1041.2 L1695.0,1041.1 L1698.0,1040.3 L1701.0,1039.8 L1704.0,1040.4 L1707.0,1040.6 L1710.0,1040.9 L1713.0,1040.5 L1716.0,1039.7 L1719.0,1041.0 L1722.0,1039.8 L1725.0,1041.0 L1728.0,1040.0 L1731.0,1040.2 L1734.0,1041.0 L1737.0,1039.9 L1740.0,1039.9 L1743.0,1040.5 L1746.0,1040.9 L1749.0,1041.0 L1752.0,1040.8 L1755.0,1041.2 L1758.0,1040.5 L1761.0,1041.2 L1764.0,1039.8 L1767.0,1040.1 L1770.0,1040.5 L1773.0,1040.2 L1776.0,1040.9 L1779.0,1040.7 L1782.0,1040.5 L1785.0,1041.0 L1788.0,1040.6 L1791.0,1040.2 L1794.0,1040.3 L1797.0,1041.1 L1800.0,1041.1 L1803.0,1040.0 L1806.0,1041.1 L1809.0,1041.2 L1812.0,1040.5 L1815.0,1040.6 L1818.0,1040.0 L1821.0,1040.6 L1824.0,1040.5 L1827.0,1040.7 L1830.0,1039.7 L1833.0,1041.3 L1836.0,1040.5 L1839.0,1040.3 L1842.0,1041.0 L1845.0,1040.6 L1848.0,1040.5 L1851.0,1040.8 L1854.0,1039.8 L1857.0,1040.6 L1860.0,1040.4 L1863.0,1041.2 L1866.0,1041.2 L1869.0,1040.1 L1872.0,1040.5 L1875.0,1039.9 L1878.0,1040.4 L1881.0,1041.0 L1884.0,1041.1 L1887.0,1040.5 L1890.0,1040.2 L1893.0,1040.0 L1896.0,1040.7 L1899.0,1041.2 L1902.0,1039.9 L1905.0,1040.9 L1908.0,1039.7 L1910.0,1040.5" fill="none" stroke="#b0e38a" stroke-width="6" stroke-linejoin="round" opacity="1"/><path d="M1376.0,1038.1 L1381.0,1038.2 L1386.0,1038.7 L1391.0,1038.3 L1396.0,1038.3 L1401.0,1038.6 L1406.0,1038.0 L1411.0,1038.8 L1416.0,1038.0 L1421.0,1038.5 L1426.0,1038.2 L1431.0,1038.1 L1436.0,1038.5 L1441.0,1038.4 L1446.0,1038.4 L1451.0,1038.4 L1456.0,1038.5 L1461.0,1038.1 L1466.0,1038.1 L1471.0,1038.7 L1476.0,1038.7 L1481.0,1038.5 L1486.0,1038.9 L1491.0,1038.6 L1496.0,1038.9 L1501.0,1038.2 L1506.0,1038.8 L1511.0,1038.9 L1516.0,1039.0 L1521.0,1038.3 L1526.0,1038.3 L1531.0,1039.0 L1536.0,1038.2 L1541.0,1039.1 L1546.0,1039.0 L1551.0,1038.1 L1556.0,1038.2 L1561.0,1038.8 L1566.0,1038.2 L1571.0,1038.0 L1576.0,1038.9 L1581.0,1038.4 L1586.0,1038.8 L1591.0,1038.1 L1596.0,1038.4 L1601.0,1038.7 L1606.0,1037.9 L1611.0,1038.1 L1616.0,1038.7 L1621.0,1039.0 L1626.0,1039.1 L1631.0,1038.0 L1636.0,1038.5 L1641.0,1038.8 L1646.0,1038.5 L1651.0,1038.7 L1656.0,1038.1 L1661.0,1038.0 L1666.0,1038.0 L1671.0,1037.9 L1676.0,1038.6 L1681.0,1038.5 L1686.0,1038.6 L1691.0,1038.1 L1696.0,1038.1 L1701.0,1038.1 L1706.0,1038.9 L1711.0,1039.1 L1716.0,1039.0 L1721.0,1038.0 L1726.0,1038.0 L1731.0,1039.0 L1736.0,1038.5 L1741.0,1038.8 L1746.0,1038.3 L1751.0,1038.5 L1756.0,1038.5 L1761.0,1038.4 L1766.0,1038.6 L1771.0,1037.9 L1776.0,1038.7 L1781.0,1038.9 L1786.0,1038.1 L1791.0,1038.4 L1796.0,1038.8 L1801.0,1038.4 L1806.0,1038.1 L1811.0,1038.1 L1816.0,1038.5 L1821.0,1037.9 L1826.0,1039.0 L1831.0,1038.9 L1836.0,1038.7 L1841.0,1038.9 L1846.0,1038.7 L1851.0,1038.4 L1856.0,1038.6 L1861.0,1038.5 L1866.0,1039.1 L1871.0,1038.9 L1876.0,1038.2 L1881.0,1039.0 L1886.0,1038.8 L1891.0,1038.8 L1896.0,1038.9 L1901.0,1038.4 L1906.0,1039.0 L1910.0,1038.5" fill="none" stroke="#c2e47c" stroke-width="2.5" stroke-linejoin="round" opacity="0.6"/><line x1="1906" y1="810" x2="1906" y2="1039" stroke="#7fa878" stroke-width="2" opacity="0.8"/><line x1="1906" y1="1009" x2="1906" y2="1041" stroke="#a3d993" stroke-width="2.8" opacity="0.9"/><rect x="39" y="7" width="1872" height="4" fill="#383a38"/><line x1="40" y1="13.5" x2="1910" y2="13.5" stroke="#26361f" stroke-width="6"/><line x1="40" y1="13.5" x2="1910" y2="13.5" stroke="#bcdcb4" stroke-width="1.8"/><line x1="40" y1="20.5" x2="908" y2="20.5" stroke="#3a3618" stroke-width="5"/><line x1="40" y1="20.5" x2="908" y2="20.5" stroke="#e2e0a0" stroke-width="1.8"/><line x1="42" y1="27.5" x2="810" y2="27.5" stroke="#3e2e1e" stroke-width="4"/><line x1="42" y1="27.5" x2="810" y2="27.5" stroke="#dca870" stroke-width="1.8"/><rect x="50" y="7" width="11" height="27" fill="rgba(200,200,200,0.35)"/><rect x="39.2" y="7.8" width="67" height="26" fill="none" stroke="#dcdcdc" stroke-width="1.8"/><line x1="40.5" y1="37" x2="40.5" y2="69" stroke="#8a8a8a" stroke-width="2"/><line x1="134.1" y1="62" x2="134.1" y2="69" stroke="#8a8a8a" stroke-width="2"/><line x1="227.6" y1="37" x2="227.6" y2="69" stroke="#8a8a8a" stroke-width="2"/><line x1="321.1" y1="62" x2="321.1" y2="69" stroke="#8a8a8a" stroke-width="2"/><line x1="414.7" y1="37" x2="414.7" y2="69" stroke="#8a8a8a" stroke-width="2"/><line x1="508.2" y1="62" x2="508.2" y2="69" stroke="#8a8a8a" stroke-width="2"/><line x1="601.8" y1="37" x2="601.8" y2="69" stroke="#8a8a8a" stroke-width="2"/><line x1="695.4" y1="62" x2="695.4" y2="69" stroke="#8a8a8a" stroke-width="2"/><line x1="788.9" y1="37" x2="788.9" y2="69" stroke="#8a8a8a" stroke-width="2"/><line x1="882.4" y1="62" x2="882.4" y2="69" stroke="#8a8a8a" stroke-width="2"/><line x1="976.0" y1="37" x2="976.0" y2="69" stroke="#8a8a8a" stroke-width="2"/><line x1="1069.5" y1="62" x2="1069.5" y2="69" stroke="#8a8a8a" stroke-width="2"/><line x1="1163.1" y1="37" x2="1163.1" y2="69" stroke="#8a8a8a" stroke-width="2"/><line x1="1256.6" y1="62" x2="1256.6" y2="69" stroke="#8a8a8a" stroke-width="2"/><line x1="1350.2" y1="37" x2="1350.2" y2="69" stroke="#8a8a8a" stroke-width="2"/><line x1="1443.8" y1="62" x2="1443.8" y2="69" stroke="#8a8a8a" stroke-width="2"/><line x1="1537.3" y1="37" x2="1537.3" y2="69" stroke="#8a8a8a" stroke-width="2"/><line x1="1630.8" y1="62" x2="1630.8" y2="69" stroke="#8a8a8a" stroke-width="2"/><line x1="1724.4" y1="37" x2="1724.4" y2="69" stroke="#8a8a8a" stroke-width="2"/><line x1="1818.0" y1="62" x2="1818.0" y2="69" stroke="#8a8a8a" stroke-width="2"/><line x1="11" y1="132" x2="39" y2="132" stroke="#b0b0b0" stroke-width="2"/><line x1="32" y1="198" x2="39" y2="198" stroke="#8a8a8a" stroke-width="2"/><line x1="11" y1="263.5" x2="39" y2="263.5" stroke="#b0b0b0" stroke-width="2"/><line x1="32" y1="329" x2="39" y2="329" stroke="#8a8a8a" stroke-width="2"/><line x1="11" y1="394" x2="39" y2="394" stroke="#b0b0b0" stroke-width="2"/><line x1="11" y1="459" x2="39" y2="459" stroke="#b0b0b0" stroke-width="2"/><line x1="32" y1="532" x2="39" y2="532" stroke="#8a8a8a" stroke-width="2"/><line x1="11" y1="605" x2="39" y2="605" stroke="#b0b0b0" stroke-width="2"/><line x1="32" y1="677" x2="39" y2="677" stroke="#8a8a8a" stroke-width="2"/><line x1="11" y1="750" x2="39" y2="750" stroke="#b0b0b0" stroke-width="2"/><line x1="32" y1="842" x2="39" y2="842" stroke="#8a8a8a" stroke-width="2"/><line x1="11" y1="927" x2="39" y2="927" stroke="#b0b0b0" stroke-width="2"/><line x1="32" y1="1012" x2="39" y2="1012" stroke="#8a8a8a" stroke-width="2"/></svg>
<div class="tl" style="left:47.0px">0.0 s</div>
<div class="tl" style="left:234.1px">500 ms</div>
<div class="tl" style="left:421.2px">1.00 s</div>
<div class="tl" style="left:608.3px">1.5 s</div>
<div class="tl" style="left:795.4px">2.0 s</div>
<div class="tl" style="left:982.5px">2.5 s</div>
<div class="tl" style="left:1169.6px">3.0 s</div>
<div class="tl" style="left:1356.7px">3.5 s</div>
<div class="tl" style="left:1543.8px">4.0 s</div>
<div class="tl" style="left:1730.9px">4.5 s</div>
<div class="yl" style="left:18px;top:127px">400 mA</div>
<div class="yl" style="left:18px;top:258px">200 mA</div>
<div class="yl" style="left:18px;top:388px">0.0 A</div>
<div class="yl" style="left:18px;top:453px">4 V</div>
<div class="yl" style="left:18px;top:599px">2 V</div>
<div class="yl" style="left:18px;top:744px">0.0 V</div>
<div class="yl" style="left:18px;top:921px">1 W</div>
<div class="yl" style="left:18px;top:1092px">0.0 W</div>
<div class="lab" style="top:78px;width:205px;background:#6cad9b;color:#0b1510">Main current - Ace</div>
<div class="lab" style="top:427px;width:205px;background:#6b6b6b;color:#f2f2f2">Main voltage - Ace</div>
<div class="lab" style="top:776px;width:193px;background:#6b6b6b;color:#f2f2f2">Main power - Ace</div>
<div class="st" style="left:1455px;top:79px;width:448px;height:158px">
<div class="tri" style="left:18px;top:18px"></div>
<div class="h" style="left:46px">MIN</div>
<div class="h" style="left:146px">AVG</div>
<div class="h" style="left:247px">MAX</div>
<div class="h" style="left:347px">ENERGY</div>
<div class="hl" style="top:35px;width:434px"></div>
<div class="sq" style="left:18px;top:45.0px;background:#93e08a"></div>
<div class="c" style="left:46px;top:40.0px">-3.06 mA</div>
<div class="c" style="left:146px;top:40.0px">18.6 mA</div>
<div class="c" style="left:247px;top:40.0px">400 mA</div>
<div class="c" style="left:347px;top:40.0px">17.5 µWh</div>
<div class="sq" style="left:18px;top:76.7px;background:#f4ee48"></div>
<div class="c" style="left:46px;top:71.7px">-10.3 mA</div>
<div class="c" style="left:146px;top:71.7px">18.2 mA</div>
<div class="c" style="left:247px;top:71.7px">393 mA</div>
<div class="c" style="left:347px;top:71.7px">16.5 µWh</div>
<div class="sq" style="left:18px;top:108.4px;background:#f0a038"></div>
<div class="c" style="left:46px;top:103.4px">-2.69 mA</div>
<div class="c" style="left:146px;top:103.4px">18.8 mA</div>
<div class="c" style="left:247px;top:103.4px">404 mA</div>
<div class="c" style="left:347px;top:103.4px">17.0 µWh</div>
<div class="sel" style="left:0;width:448px;text-align:center;top:137.5px">SELECTION</div>
</div>
<div class="st" style="left:1588px;top:427px;width:315px;height:158px">
<div class="tri" style="left:18px;top:18px"></div>
<div class="h" style="left:46px">MIN</div>
<div class="h" style="left:136px">AVG</div>
<div class="h" style="left:225px">MAX</div>
<div class="hl" style="top:35px;width:301px"></div>
<div class="sq" style="left:18px;top:45.0px;background:#93e08a"></div>
<div class="c" style="left:46px;top:40.0px">5.50 mV</div>
<div class="c" style="left:136px;top:40.0px">3.72 V</div>
<div class="c" style="left:225px;top:40.0px">4.32 V</div>
<div class="sq" style="left:18px;top:76.7px;background:#f4ee48"></div>
<div class="c" style="left:46px;top:71.7px">2.10 mV</div>
<div class="c" style="left:136px;top:71.7px">2.65 V</div>
<div class="c" style="left:225px;top:71.7px">4.15 V</div>
<div class="sq" style="left:18px;top:108.4px;background:#f0a038"></div>
<div class="c" style="left:46px;top:103.4px">3.57 mV</div>
<div class="c" style="left:136px;top:103.4px">3.11 V</div>
<div class="c" style="left:225px;top:103.4px">4.13 V</div>
<div class="sel" style="left:0;width:315px;text-align:center;top:137.5px">SELECTION</div>
</div>
<div class="st" style="left:1553px;top:775px;width:350px;height:158px">
<div class="tri" style="left:18px;top:18px"></div>
<div class="h" style="left:46px">MIN</div>
<div class="h" style="left:147px">AVG</div>
<div class="h" style="left:248px">MAX</div>
<div class="hl" style="top:35px;width:336px"></div>
<div class="sq" style="left:18px;top:45.0px;background:#93e08a"></div>
<div class="c" style="left:46px;top:40.0px">-7.90 mW</div>
<div class="c" style="left:147px;top:40.0px">77.3 mW</div>
<div class="c" style="left:248px;top:40.0px">802 mW</div>
<div class="sq" style="left:18px;top:76.7px;background:#f4ee48"></div>
<div class="c" style="left:46px;top:71.7px">-4.60 mW</div>
<div class="c" style="left:147px;top:71.7px">72.5 mW</div>
<div class="c" style="left:248px;top:71.7px">787 mW</div>
<div class="sq" style="left:18px;top:108.4px;background:#f0a038"></div>
<div class="c" style="left:46px;top:103.4px">-6.28 mW</div>
<div class="c" style="left:147px;top:103.4px">75.0 mW</div>
<div class="c" style="left:248px;top:103.4px">834 mW</div>
<div class="sel" style="left:0;width:350px;text-align:center;top:137.5px">SELECTION</div>
</div>
</body></html>
